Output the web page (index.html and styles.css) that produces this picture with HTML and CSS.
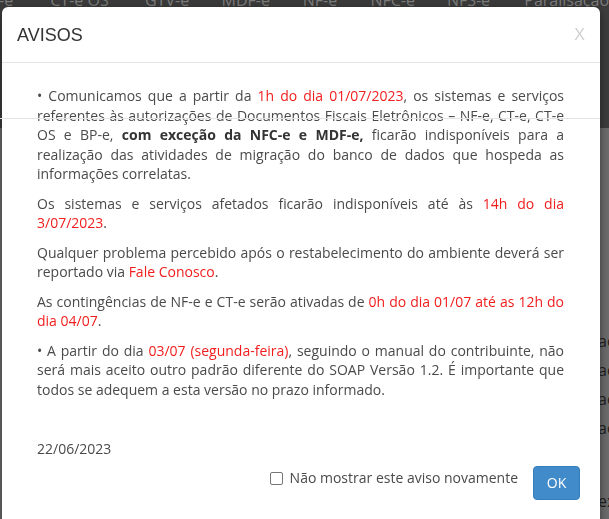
FILE: index.html
```html
<!DOCTYPE html>
<html lang="pt-BR">
<head>
<meta charset="utf-8">
<title>Avisos</title>
<link rel="stylesheet" href="styles.css">
</head>
<body>
<div class="page">
  <nav class="topnav">
    <span>-e</span><span>CT-e OS</span><span>GTV-e</span><span>MDF-e</span><span>NF-e</span><span>NFC-e</span><span>NFS-e</span><span>Paralisação</span>
  </nav>
  <div class="dark-band"></div>
  <div class="bg-main">
    <div class="bg-item">acesso</div>
    <div class="bg-item">acesso</div>
    <div class="bg-item">acesso</div>
    <div class="bg-item">acesso</div>
    <div class="bg-item bg-last">exibir</div>
  </div>
</div>

<div class="modal">
  <div class="modal-header">
    <h4 class="modal-title">AVISOS</h4>
    <span class="close">X</span>
  </div>
  <div class="glitch-line"></div>
  <div class="modal-body">
    <p>• Comunicamos que a partir da <span class="red">1h do dia 01/07/2023</span>, os sistemas e serviços referentes às autorizações de Documentos Fiscais Eletrônicos – NF-e, CT-e, CT-e OS e BP-e, <b>com exceção da NFC-e e MDF-e,</b> ficarão indisponíveis para a realização das atividades de migração do banco de dados que hospeda as informações correlatas.</p>
    <p>Os sistemas e serviços afetados ficarão indisponíveis até às <span class="red">14h do dia 3/07/2023</span>.</p>
    <p>Qualquer problema percebido após o restabelecimento do ambiente deverá ser reportado via <span class="red">Fale Conosco</span>.</p>
    <p>As contingências de NF-e e CT-e serão ativadas de <span class="red">0h do dia 01/07 até as 12h do dia 04/07</span>.</p>
    <p>• A partir do dia <span class="red">03/07 (segunda-feira)</span>, seguindo o manual do contribuinte, não será mais aceito outro padrão diferente do SOAP Versão 1.2. É importante que todos se adequem a esta versão no prazo informado.</p>
    <p class="date">22/06/2023</p>
  </div>
  <div class="modal-footer">
    <label class="check"><span class="box"></span>Não mostrar este aviso novamente</label>
    <button class="btn-ok">OK</button>
  </div>
</div>
</body>
</html>
```

FILE: styles.css
```css
html, body {
  margin: 0;
  padding: 0;
  height: 100%;
  overflow: hidden;
}
body {
  background: #6c6c6c;
  font-family: "Open Sans", "Liberation Sans", sans-serif;
}
.page {
  height: 100%;
}
.topnav {
  display: flex;
  background: #3a3a3a;
  color: #7c7c7c;
  font-size: 16px;
  line-height: 20px;
  margin-top: -10px;
  height: 17px;
  white-space: nowrap;
  overflow: hidden;
}
.topnav span:nth-child(1) { margin-left: -1px; width: 53px; }
.topnav span:nth-child(2) { width: 98px; }
.topnav span:nth-child(3) { width: 79px; }
.topnav span:nth-child(4) { width: 84px; }
.topnav span:nth-child(5) { width: 70px; }
.topnav span:nth-child(6) { width: 79px; }
.topnav span:nth-child(7) { width: 80px; }
.dark-band {
  height: 121px;
  background: #3d3d3d;
}
.bg-main {
  padding: 203px 0 0 598px;
  color: #1e1e1e;
  font-size: 16px;
  line-height: 20px;
  white-space: nowrap;
}
.bg-item {
  margin-bottom: 9px;
}
.bg-last {
  margin-top: 53px;
}

.modal {
  position: fixed;
  left: 2px;
  top: 7px;
  width: 598px;
  height: 540px;
  background: #fff;
  border-radius: 6px 6px 0 0;
  box-shadow: 0 3px 9px rgba(0,0,0,0.5);
}
.modal-header {
  display: flex;
  align-items: center;
  justify-content: space-between;
  padding: 15px 15px 14px 15px;
  border-bottom: 1px solid #e5e5e5;
}
.modal-title {
  margin: 0;
  font-family: "Liberation Sans", Arial, sans-serif;
  font-weight: normal;
  font-size: 18px;
  line-height: 26px;
  color: #333;
}
.close {
  font-family: "Liberation Sans", Arial, sans-serif;
  font-size: 16px;
  color: #cfcfcf;
  line-height: 26px;
}
.glitch-line {
  position: absolute;
  left: -2px;
  top: 111px;
  width: 600px;
  height: 1px;
  background: #e3e3e3;
}
.modal-body {
  padding: 23px 36px 0 35px;
  color: #4a4a4a;
  font-size: 14px;
  line-height: 19.5px;
}
.modal-body p {
  margin: 0 0 10px;
  text-align: justify;
}
.modal-body b {
  color: #333;
  font-weight: 700;
}
.red {
  color: #f21d1d;
}
.modal-body p.date {
  margin: 40px 0 0;
  text-align: left;
}
.modal-footer {
  display: flex;
  justify-content: flex-end;
  align-items: center;
  gap: 15px;
  padding: 7px 20px 0 0;
}
.check {
  display: flex;
  align-items: center;
  gap: 7px;
  color: #4a4a4a;
  font-size: 14px;
  line-height: 20px;
  margin-top: -9px;
}
.box {
  width: 11px;
  height: 11px;
  border: 1px solid #767676;
  border-radius: 2px;
  background: #fff;
}
.btn-ok {
  width: 47px;
  height: 34px;
  border: 1px solid #357ebd;
  border-radius: 4px;
  background: #428bca;
  color: #fff;
  font-family: "Open Sans", "Liberation Sans", sans-serif;
  font-size: 14px;
  padding: 0;
}
```
